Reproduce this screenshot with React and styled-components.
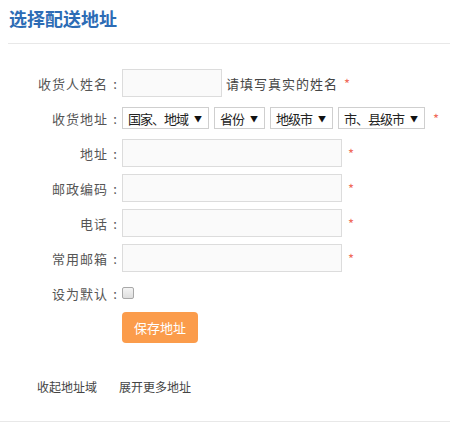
import React from "react";
import styled, { createGlobalStyle } from "styled-components";

const Global = createGlobalStyle`
  html, body { margin: 0; padding: 0; background: #fff; }
  body { font-family: "Noto Sans CJK SC", "Noto Sans", sans-serif; }
  * { box-sizing: border-box; }
`;

const Page = styled.div`
  width: 450px;
  height: 428px;
  overflow: hidden;
  background: #fff;
`;

const Header = styled.div`
  margin-left: 8px;
  height: 44px;
  border-bottom: 1px solid #e8e8e8;
  padding: 6px 0 0 1px;
`;

const Title = styled.h2`
  margin: 0;
  font-size: 18px;
  line-height: 24px;
  font-weight: bold;
  color: #2d6cb5;
`;

const Form = styled.div`
  display: flex;
  flex-direction: column;
  gap: 7px;
  padding-top: 25px;
`;

const Row = styled.div`
  display: grid;
  grid-template-columns: 122px auto;
  align-items: center;
  min-height: 28px;
  margin-top: ${(p) => p.$shift || 0}px;
`;

const Label = styled.span`
  display: flex;
  justify-content: flex-end;
  align-items: center;
  font-size: 13px;
  letter-spacing: 1px;
  color: #555;
  white-space: nowrap;
`;

const Colon = styled.span`
  display: inline-block;
  width: 14px;
  text-align: center;
  letter-spacing: 0;
`;

const Field = styled.div`
  display: flex;
  align-items: center;
  gap: ${(p) => p.$gap ?? 5}px;
`;

const Input = styled.input`
  width: ${(p) => p.$w}px;
  height: 28px;
  border: 1px solid #dcdcdc;
  background: #fafafa;
  padding: 0 6px;
  font-size: 13px;
  outline: none;
`;

const Hint = styled.span`
  font-size: 13px;
  letter-spacing: 1px;
  color: #444;
  margin-left: -1px;
`;

const Star = styled.span`
  color: #f06a5a;
  font-size: 13px;
  line-height: 1;
  margin-left: ${(p) => p.$ml || 0}px;
`;

const Select = styled.div`
  width: ${(p) => p.$w}px;
  height: 22px;
  border: 1px solid #cfcfcf;
  background: #fff;
  display: flex;
  align-items: center;
  justify-content: space-between;
  padding: 0 6px 0 5px;
  font-size: 13px;
  letter-spacing: -1px;
  color: #222;
  white-space: nowrap;
`;

const Arrow = styled.span`
  font-size: 8px;
  letter-spacing: 0;
  color: #111;
`;

const Check = styled.span`
  width: 12px;
  height: 12px;
  border: 1px solid #a8a8a8;
  border-radius: 2px;
  background: linear-gradient(#f4f4f4, #dedede);
  display: inline-block;
`;

const Button = styled.button`
  width: 76px;
  height: 31px;
  border: none;
  border-radius: 4px;
  background: #fb9c4b;
  color: #fff;
  font-family: inherit;
  font-size: 13px;
  cursor: pointer;
`;

const Links = styled.div`
  display: flex;
  gap: 22px;
  padding-left: 37px;
  margin-top: 35px;
  font-size: 12px;
  color: #444;
`;

const Footer = styled.div`
  margin-top: 26px;
  border-top: 1px solid #e8e8e8;
`;

const fields = ["地址", "邮政编码", "电话", "常用邮箱"];

const selects = [
  { text: "国家、地域", w: 87 },
  { text: "省份", w: 51 },
  { text: "地级市", w: 63 },
  { text: "市、县级市", w: 87 },
];

const FieldLabel = ({ children }) => (
  <Label>
    {children}
    <Colon>:</Colon>
  </Label>
);

export default function App() {
  return (
    <Page>
      <Global />
      <Header>
        <Title>选择配送地址</Title>
      </Header>
      <Form>
        <Row>
          <FieldLabel>收货人姓名</FieldLabel>
          <Field>
            <Input $w={100} />
            <Hint>请填写真实的姓名</Hint>
            <Star $ml={1}>*</Star>
          </Field>
        </Row>
        <Row>
          <FieldLabel>收货地址</FieldLabel>
          <Field>
            {selects.map((s) => (
              <Select key={s.text} $w={s.w}>
                <span>{s.text}</span>
                <Arrow>▼</Arrow>
              </Select>
            ))}
            <Star $ml={3}>*</Star>
          </Field>
        </Row>
        {fields.map((f) => (
          <Row key={f}>
            <FieldLabel>{f}</FieldLabel>
            <Field $gap={6}>
              <Input $w={220} />
              <Star>*</Star>
            </Field>
          </Row>
        ))}
        <Row>
          <FieldLabel>设为默认</FieldLabel>
          <Field>
            <Check />
          </Field>
        </Row>
        <Row $shift={-2}>
          <span />
          <Field>
            <Button>保存地址</Button>
          </Field>
        </Row>
      </Form>
      <Links>
        <span>收起地址域</span>
        <span>展开更多地址</span>
      </Links>
      <Footer />
    </Page>
  );
}
